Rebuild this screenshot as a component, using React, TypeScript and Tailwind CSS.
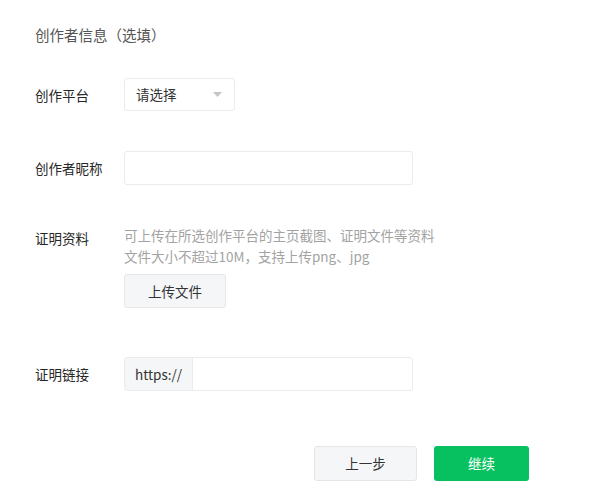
import React from "react";

const font = {
  fontFamily: '"Noto Sans CJK SC", "Noto Sans", sans-serif',
};

function Row({
  label,
  children,
  className = "",
}: {
  label: string;
  children: React.ReactNode;
  className?: string;
}) {
  return (
    <div className={"flex flex-row " + className}>
      <div className="w-[89px] shrink-0 text-[13.5px] text-[#262626] leading-[34px]">
        {label}
      </div>
      <div className="flex-1">{children}</div>
    </div>
  );
}

export default function App() {
  return (
    <div
      className="w-[612px] h-[483px] bg-white overflow-hidden pl-[35px] pt-[25px]"
      style={font}
    >
      <h1 className="text-[14.5px] leading-[20px] text-[#555]">
        创作者信息（选填）
      </h1>

      {/* 创作平台 */}
      <Row label="创作平台" className="mt-[33px]">
        <div className="w-[111px] h-[33px] border border-[#ebebeb] rounded-[3px] flex flex-row items-center justify-between pl-[11px] pr-[12px]">
          <span className="text-[13.5px] text-[#333]">请选择</span>
          <svg width="9" height="5" viewBox="0 0 9 5">
            <path d="M0 0 L9 0 L4.5 5 Z" fill="#c4c4c4" />
          </svg>
        </div>
      </Row>

      {/* 创作者昵称 */}
      <Row label="创作者昵称" className="mt-[39px]">
        <div className="w-[289px] h-[34px] border border-[#ebebeb] rounded-[3px]" />
      </Row>

      {/* 证明资料 */}
      <Row label="证明资料" className="mt-[36px]">
        <div className="pt-[4px]">
          <p className="text-[13.5px] leading-[21px] text-[#a3a3a3]">
            可上传在所选创作平台的主页截图、证明文件等资料
          </p>
          <p className="text-[13.5px] leading-[21px] text-[#a3a3a3]">
            文件大小不超过10M，支持上传png、jpg
          </p>
          <button className="mt-[7px] w-[102px] h-[34px] bg-[#f5f6f7] border border-[#e6e6e6] rounded-[3px] text-[13.5px] text-[#333]">
            上传文件
          </button>
        </div>
      </Row>

      {/* 证明链接 */}
      <Row label="证明链接" className="mt-[49px]">
        <div className="w-[289px] h-[34px] border border-[#ebebeb] rounded-[3px] flex flex-row overflow-hidden">
          <div className="w-[68px] h-full bg-[#f5f6f7] border-r border-[#ebebeb] flex items-center justify-center text-[13.5px] text-[#333]">
            https://
          </div>
          <div className="flex-1" />
        </div>
      </Row>

      {/* 按钮 */}
      <div className="mt-[55px] flex flex-row pl-[279px] gap-[17px]">
        <button className="w-[103px] h-[35px] bg-[#f5f6f7] border border-[#e6e6e6] rounded-[3px] text-[13.5px] text-[#333]">
          上一步
        </button>
        <button className="w-[95px] h-[35px] bg-[#07c160] rounded-[3px] text-[13.5px] text-white">
          继续
        </button>
      </div>
    </div>
  );
}
